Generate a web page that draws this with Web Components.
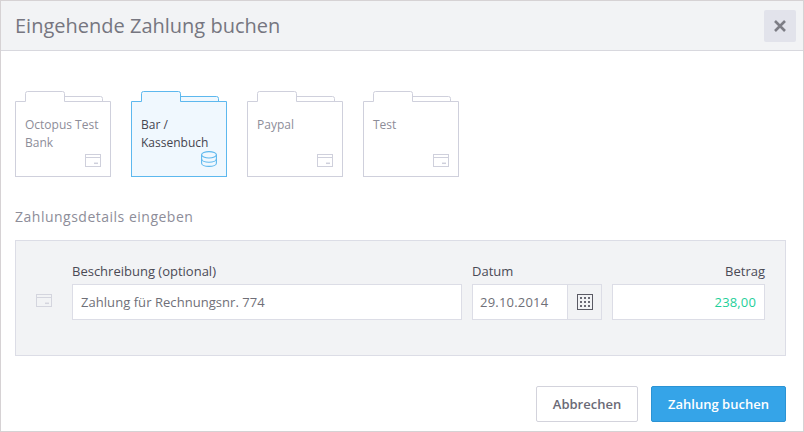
<!DOCTYPE html>
<html lang="de">
<head>
<meta charset="UTF-8">
<title>Eingehende Zahlung buchen</title>
<style>
  html, body { margin: 0; padding: 0; background: #fff; }
  body { width: 804px; height: 432px; overflow: hidden; font-family: "Open Sans", "Noto Sans", sans-serif; }
</style>
</head>
<body>
  <payment-dialog heading="Eingehende Zahlung buchen">
    <folder-tile icon="card">Octopus Test Bank</folder-tile>
    <folder-tile icon="coins" selected>Bar / Kassenbuch</folder-tile>
    <folder-tile icon="card">Paypal</folder-tile>
    <folder-tile icon="card">Test</folder-tile>
  </payment-dialog>

  <script>
    var cardIcon = function (color) {
      return '<svg width="16" height="13" viewBox="0 0 16 13" fill="none" stroke="' + color + '">' +
        '<rect x=".5" y=".5" width="15" height="12"/><path d="M1 3.5h14"/><path d="M9 9.3h4" stroke-width="1.5"/></svg>';
    };

    // folder with a front tab and a lower tab behind it
    class FolderTile extends HTMLElement {
      constructor() {
        super();
        var shadow = this.attachShadow({ mode: "open" });
        var on = this.hasAttribute("selected");
        var line = on ? "#5db8ee" : "#cfd0dc";
        var fill = on ? "#f0f8fe" : "#fff";
        var icon = this.getAttribute("icon") == "coins"
          ? '<svg width="16" height="16" viewBox="0 0 16 16" fill="none" stroke="' + line + '" stroke-width="1.1">' +
            '<ellipse cx="8" cy="3.8" rx="7.4" ry="3.2"/><path d="M.6 3.8v8.4c0 1.8 3.3 3.2 7.4 3.2s7.4-1.4 7.4-3.2V3.8"/>' +
            '<path d="M.6 8c0 1.8 3.3 3.2 7.4 3.2S15.400 9.800 15.400 8"/></svg>'
          : cardIcon(line);
        shadow.innerHTML = '<style>' +
          ':host{display:block;width:96px;height:86px;font-size:12px;line-height:18px;color:' + (on ? "#45454f" : "#8d8d99") + '}' +
          'svg{display:block}' +
          '.body{box-sizing:border-box;height:75px;border:1px solid ' + line + ';border-top:0;background:' + fill + ';padding:14px 9px 0;position:relative}' +
          '.mark{position:absolute;right:9px;bottom:9px}' +
          '</style>' +
          '<svg width="96" height="11" viewBox="0 0 96 11">' +
          '<path d="M49.500 10.500V5.500H85.500a2 2 0 0 1 2 2v3" fill="' + fill + '" stroke="' + line + '"/>' +
          '<path d="M.5 11v-.5h10V2.500a2 2 0 0 1 2-2h35a2 2 0 0 1 2 2v8h46v.5" fill="' + fill + '" stroke="' + line + '"/>' +
          '</svg>' +
          '<div class="body"><slot></slot><span class="mark">' + icon + '</span></div>';
      }
    }
    customElements.define("folder-tile", FolderTile);

    class TextField extends HTMLElement {
      constructor() {
        super();
        var shadow = this.attachShadow({ mode: "open" });
        shadow.innerHTML = '<style>' +
          ':host{display:block;box-sizing:border-box;height:36px;line-height:34px;background:#fff;border:1px solid #dcdde6;padding:0 8px;font-size:13px;color:#6f6f78;letter-spacing:.05px}' +
          ':host([amount]){text-align:right;color:#1fcf9a;letter-spacing:.15px}' +
          ':host([date]){padding:0 7px;letter-spacing:.2px}' +
          '</style><slot></slot>';
      }
    }
    customElements.define("text-field", TextField);

    class PaymentDialog extends HTMLElement {
      constructor() {
        super();
        var shadow = this.attachShadow({ mode: "open" });
        shadow.innerHTML = '<style>' +
          ':host{display:block;box-sizing:border-box;width:804px;height:432px;border:1px solid #d6d2d4;background:#fff;color:#45454f}' +
          'header{box-sizing:border-box;height:50px;background:#f2f3f5;border-bottom:1px solid #d8d8de;display:flex;align-items:center;justify-content:space-between;padding:0 7px 0 14px}' +
          'h1{margin:0;font-weight:400;font-size:20px;color:#767680}' +
          '.close{width:32px;height:32px;background:#e2e3eb;border-radius:2px;display:flex;align-items:center;justify-content:center}' +
          'main{padding:40px 17px 0 14px}' +
          '.tiles{display:flex;gap:20px}' +
          'h2{margin:30px 0 14px;font-weight:400;font-size:14px;line-height:19px;color:#8d8d99;letter-spacing:.5px}' +
          '.panel{box-sizing:border-box;height:116px;background:#f2f3f5;border:1px solid #dcdde6;padding:22px 20px 0 20px;display:grid;grid-template-columns:16px 410px 140px 163px;grid-template-rows:21px 36px;align-items:start}' +
          '.lab{font-size:13px;line-height:17px;color:#4a4a55}' +
          '.lab.a,.desc{margin-left:20px}' +
          '.lab.b,.date,.lab.c,.amt{margin-left:10px}' +
          '.lab.c{text-align:right}' +
          '.side{grid-column:1;grid-row:2;margin-top:10px}' +
          '.side svg{display:block}' +
          '.date{display:flex}' +
          '.date text-field{width:96px;flex:none}' +
          '.cal{box-sizing:border-box;width:35px;height:36px;margin-left:-1px;flex:none;border:1px solid #dcdde6;display:flex;align-items:center;justify-content:center;background:#f2f3f5}' +
          'footer{display:flex;justify-content:flex-end;gap:13px;padding:30px 17px 0 0}' +
          'button{box-sizing:border-box;height:36px;font:600 13px "Open Sans","Noto Sans",sans-serif;border-radius:2px;padding:0}' +
          '.ghost{width:102px;background:#fff;border:1px solid #d3d3dc;color:#6a6a76}' +
          '.go{width:135px;background:#35a4e8;border:1px solid #2b93d4;color:#fff}' +
          '</style>' +
          '<header><h1></h1><div class="close"><svg width="14" height="14" viewBox="0 0 14 14"><path d="M2 2l10 10M12 2L2 12" stroke="#7d7d85" stroke-width="2.6"/></svg></div></header>' +
          '<main><div class="tiles"><slot></slot></div>' +
          '<h2>Zahlungsdetails eingeben</h2>' +
          '<section class="panel">' +
          '<span></span><span class="lab a">Beschreibung (optional)</span>' +
          '<span class="lab b">Datum</span>' +
          '<span class="lab c">Betrag</span>' +
          '<span class="side">' + cardIcon("#d4d5de") + '</span>' +
          '<text-field class="desc">Zahlung für Rechnungsnr. 774</text-field>' +
          '<div class="date"><text-field date>29.10.2014</text-field><div class="cal"><svg width="16" height="16" viewBox="0 0 16 16" fill="none"><rect x=".5" y=".5" width="15" height="15" stroke="#5a5a64"/><path d="M3 4h2m2 0h2m2 0h2M3 8h2m2 0h2m2 0h2M3 12h2m2 0h2m2 0h2" stroke="#6a6a74" stroke-width="2"/></svg></div></div>' +
          '<text-field class="amt" amount>238,00</text-field>' +
          '</section></main>' +
          '<footer><button class="ghost">Abbrechen</button><button class="go">Zahlung buchen</button></footer>';
        shadow.querySelector("h1").textContent = this.getAttribute("heading");
      }
    }
    customElements.define("payment-dialog", PaymentDialog);
  </script>
</body>
</html>
